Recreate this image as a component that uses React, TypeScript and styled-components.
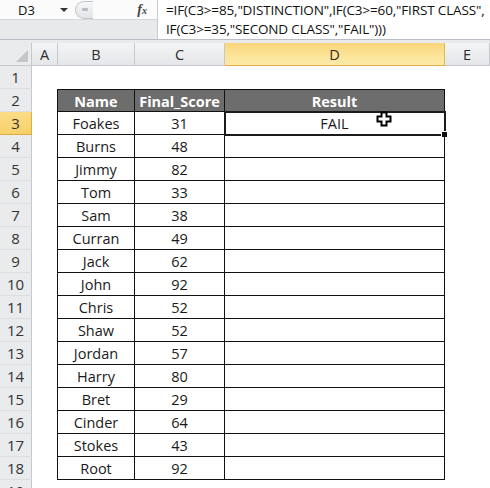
import React from "react";
import styled, { createGlobalStyle, css } from "styled-components";

const students: [string, number][] = [
  ["Foakes", 31],
  ["Burns", 48],
  ["Jimmy", 82],
  ["Tom", 33],
  ["Sam", 38],
  ["Curran", 49],
  ["Jack", 62],
  ["John", 92],
  ["Chris", 52],
  ["Shaw", 52],
  ["Jordan", 57],
  ["Harry", 80],
  ["Bret", 29],
  ["Cinder", 64],
  ["Stokes", 43],
  ["Root", 92],
];

const columns = ["A", "B", "C", "D", "E"];

const App = () => {
  return (
    <>
      <GlobalStyle />
      <Window>
        <FormulaBar>
          <NamePanel>
            <NameRow>
              <NameBox>D3</NameBox>
              <DropArrow />
              <Splitter />
              <FxLabel>
                f<sub>x</sub>
              </FxLabel>
            </NameRow>
            <NameShade />
          </NamePanel>
          <FormulaText>
            {'=IF(C3>=85,"DISTINCTION",IF(C3>=60,"FIRST CLASS",'}
            <br />
            {'IF(C3>=35,"SECOND CLASS","FAIL")))'}
          </FormulaText>
        </FormulaBar>
        <Gap />
        <Sheet>
          <Corner>
            <CornerMark />
          </Corner>
          {columns.map((c) => (
            <ColHead key={c} $active={c === "D"}>
              {c}
            </ColHead>
          ))}

          <RowHead>1</RowHead>
          <Blank style={{ gridColumn: "2 / 7" }} />

          <RowHead>2</RowHead>
          <Blank />
          <HeadCell $left>Name</HeadCell>
          <HeadCell>Final_Score</HeadCell>
          <HeadCell>Result</HeadCell>
          <Blank />

          {students.map(([name, score], i) => {
            const row = i + 3;
            return (
              <React.Fragment key={name}>
                <RowHead $active={row === 3}>{row}</RowHead>
                <Blank />
                <DataCell $left>{name}</DataCell>
                <DataCell>{score}</DataCell>
                <DataCell>
                  {row === 3 && (
                    <>
                      FAIL
                      <Selection>
                        <Handle />
                      </Selection>
                      <Cursor viewBox="0 0 16 16">
                        <path
                          d="M5.5 1.5h5v4h4v5h-4v4h-5v-4h-4v-5h4z"
                          fill="#fff"
                          stroke="#000"
                          strokeWidth="2"
                          strokeLinejoin="miter"
                        />
                      </Cursor>
                    </>
                  )}
                </DataCell>
                <Blank />
              </React.Fragment>
            );
          })}

          <RowHead $clip>19</RowHead>
          <Blank style={{ gridColumn: "2 / 7" }} />
        </Sheet>
      </Window>
    </>
  );
};

const GlobalStyle = createGlobalStyle`
  html, body {
    margin: 0;
    padding: 0;
    background: #fff;
    overflow: hidden;
  }
  body {
    font-family: "Open Sans", "Liberation Sans", sans-serif;
  }
`;

const Window = styled.div`
  width: 490px;
  height: 488px;
  overflow: hidden;
  background: #fff;
`;

const FormulaBar = styled.div`
  display: flex;
  height: 39px;
  border-bottom: 1px solid #b9bec6;
`;

const NamePanel = styled.div`
  width: 157px;
  display: flex;
  flex-direction: column;
  border-right: 1px solid #c6cbd2;
`;

const NameRow = styled.div`
  height: 19px;
  display: flex;
  align-items: center;
  background: #fbfbfb;
  border-bottom: 1px solid #d5d8dc;
`;

const NameBox = styled.div`
  width: 58px;
  padding-left: 18px;
  box-sizing: border-box;
  font-size: 13px;
  color: #111;
`;

const DropArrow = styled.div`
  width: 0;
  height: 0;
  margin-left: 2px;
  border-left: 4px solid transparent;
  border-right: 4px solid transparent;
  border-top: 4px solid #333;
`;

const Splitter = styled.div`
  width: 17px;
  height: 16px;
  margin-left: 7px;
  border-radius: 9px 0 0 9px;
  border: 1px solid #c2c6cc;
  border-right: none;
  background: linear-gradient(#f6f7f8, #e1e3e6);
  position: relative;
  &::after {
    content: "";
    position: absolute;
    left: 6px;
    top: 6px;
    width: 6px;
    height: 3px;
    border-radius: 1px;
    background: #b8bcc2;
  }
`;

const FxLabel = styled.div`
  margin-left: auto;
  margin-right: 10px;
  font-family: "Liberation Serif", serif;
  font-style: italic;
  font-weight: bold;
  font-size: 14px;
  color: #444;
  sub {
    font-size: 10px;
    vertical-align: 0;
  }
`;

const NameShade = styled.div`
  flex: 1;
  background: #e8e9eb;
`;

const FormulaText = styled.div`
  flex: 1;
  padding: 1px 0 0 8px;
  font-size: 13.5px;
  line-height: 19px;
  color: #111;
  white-space: nowrap;
  letter-spacing: -0.15px;
`;

const Gap = styled.div`
  height: 3px;
  background: #e9eaec;
`;

const Sheet = styled.div`
  display: grid;
  grid-template-columns: 32px 26px 77px 90px 220px 1fr;
  grid-template-rows: 23px;
  grid-auto-rows: 23px;
`;

const headBase = css`
  display: flex;
  align-items: center;
  justify-content: center;
  font-size: 14.5px;
  color: #2b2b2b;
  box-sizing: border-box;
  border-right: 1px solid #c5c9cf;
  border-bottom: 1px solid #c5c9cf;
`;

const Corner = styled.div`
  ${headBase};
  background: #eaebed;
  position: relative;
`;

const CornerMark = styled.div`
  position: absolute;
  right: 3px;
  bottom: 3px;
  width: 0;
  height: 0;
  border-left: 12px solid transparent;
  border-bottom: 12px solid #c3c5c8;
`;

const ColHead = styled.div<{ $active?: boolean }>`
  ${headBase};
  background: ${(p) =>
    p.$active
      ? "linear-gradient(#f9d57a, #fbe59a 60%, #fde9a8)"
      : "linear-gradient(#f3f4f5, #e4e6e9)"};
  border-right-color: ${(p) => (p.$active ? "#e1b75a" : "#c5c9cf")};
  border-bottom-color: ${(p) => (p.$active ? "#e0ad44" : "#c5c9cf")};
`;

const RowHead = styled.div<{ $active?: boolean; $clip?: boolean }>`
  ${headBase};
  background: ${(p) =>
    p.$active ? "linear-gradient(#fbdd86, #f7d06a)" : "#eaebed"};
  border-right-color: ${(p) => (p.$active ? "#e0ad44" : "#c5c9cf")};
  border-bottom-color: ${(p) => (p.$active ? "#e0ad44" : "#dadde1")};
  color: #333;
  font-size: 15px;
  align-items: ${(p) => (p.$clip ? "flex-start" : "center")};
  padding-top: ${(p) => (p.$clip ? "1px" : "0")};
`;

const Blank = styled.div`
  background: #fff;
`;

const cellBase = css<{ $left?: boolean }>`
  display: flex;
  align-items: center;
  justify-content: center;
  box-sizing: border-box;
  padding-top: 1px;
  border-right: 1px solid #111;
  border-bottom: 1px solid #111;
  border-left: ${(p) => (p.$left ? "1px solid #111" : "none")};
  margin-left: ${(p) => (p.$left ? "-1px" : "0")};
  font-size: 14.5px;
`;

const HeadCell = styled.div<{ $left?: boolean }>`
  ${cellBase};
  background: #6d6d6d;
  border-top: 1px solid #111;
  color: #fff;
  font-weight: bold;
`;

const DataCell = styled.div<{ $left?: boolean }>`
  ${cellBase};
  color: #1a1a1a;
  position: relative;
`;

const Selection = styled.div`
  position: absolute;
  left: -1px;
  top: -1px;
  right: -2px;
  bottom: -2px;
  border: 2px solid #1b1b1b;
  box-shadow: inset 0 0 0 1px #fff;
`;

const Handle = styled.div`
  position: absolute;
  right: -4px;
  bottom: -4px;
  width: 5px;
  height: 5px;
  background: #111;
  border: 1px solid #fff;
`;

const Cursor = styled.svg`
  position: absolute;
  left: 151px;
  top: -1px;
  width: 16px;
  height: 16px;
`;

export default App;
